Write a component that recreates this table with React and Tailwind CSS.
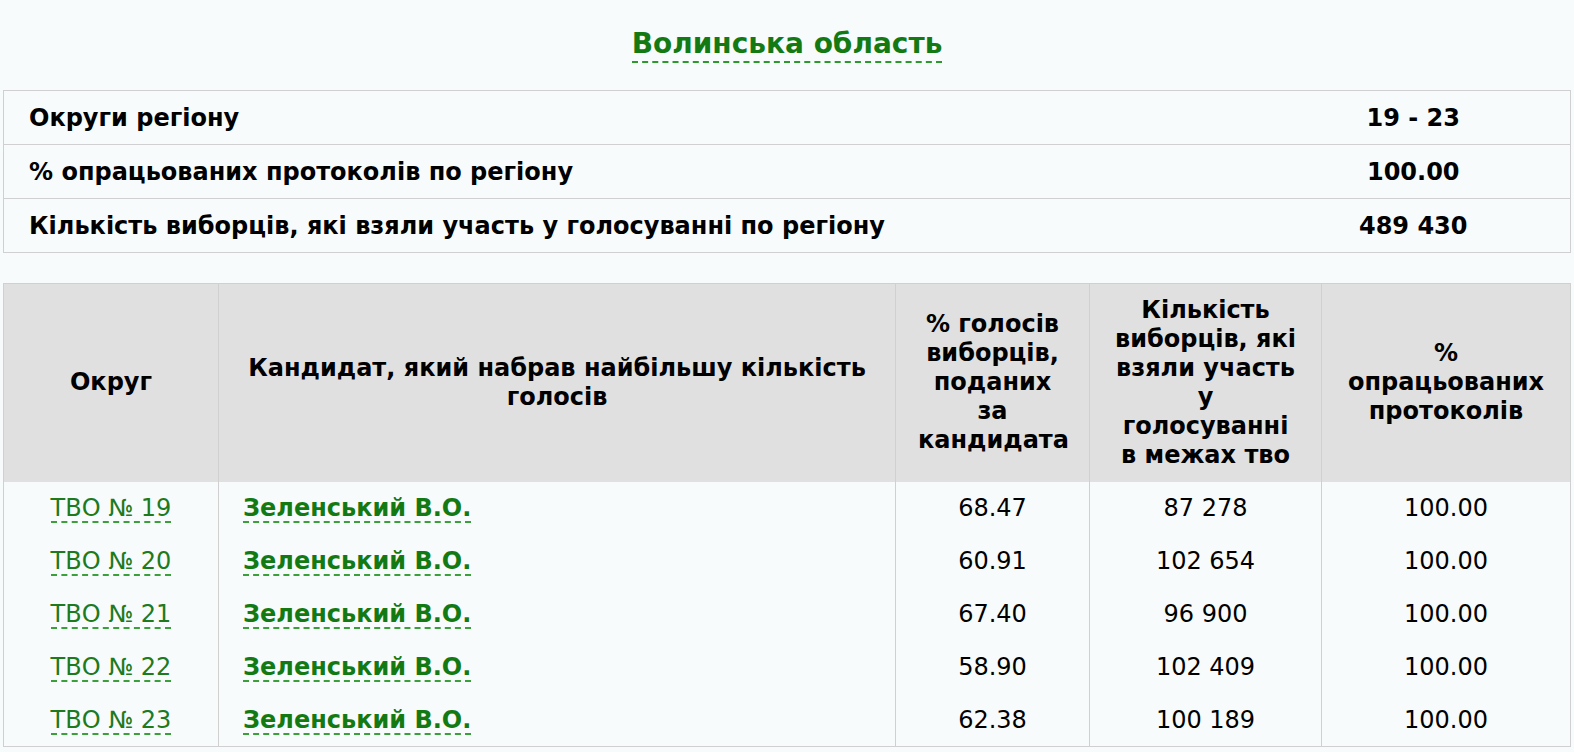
export default function App() {
  const rows = [
    ["19", "68.47", "87 278", "100.00"],
    ["20", "60.91", "102 654", "100.00"],
    ["21", "67.40", "96 900", "100.00"],
    ["22", "58.90", "102 409", "100.00"],
    ["23", "62.38", "100 189", "100.00"],
  ];
  const font = { fontFamily: '"DejaVu Sans", Verdana, sans-serif' };
  return (
    <div className="min-h-[752px] bg-[#f7fbfc] text-black px-[3px]" style={font}>
      <div className="flex justify-center pt-[27px] pb-[27px]">
        <span className="text-[28px] leading-[34px] font-bold text-[#137a13] border-b-2 border-dashed border-[#2a9a2a]">
          Волинська область
        </span>
      </div>
      <table className="w-full border-collapse border border-[#d0d0d0] text-[24px] font-bold">
        <tbody>
          {[
            ["Округи регіону", "19 - 23"],
            ["% опрацьованих протоколів по регіону", "100.00"],
            ["Кількість виборців, які взяли участь у голосуванні по регіону", "489 430"],
          ].map(([a, b]) => (
            <tr key={a} className="h-[54px] border-b border-[#d0d0d0]">
              <td className="pl-[25px] text-left">{a}</td>
              <td className="w-[314px] text-center">{b}</td>
            </tr>
          ))}
        </tbody>
      </table>
      <table className="mt-[30px] w-full table-fixed border-collapse border border-[#d0d0d0] text-[24px]">
        <colgroup>
          <col className="w-[215px]" />
          <col className="w-[677px]" />
          <col className="w-[194px]" />
          <col className="w-[232px]" />
          <col />
        </colgroup>
        <thead>
          <tr className="bg-[#e0e0e0] h-[198px] font-bold leading-[29px]">
            <th className="border-r border-[#d0d0d0] px-2">Округ</th>
            <th className="border-r border-[#d0d0d0] px-[10px]">
              Кандидат, який набрав найбільшу кількість голосів
            </th>
            <th className="border-r border-[#d0d0d0] px-[22px]">
              % голосів виборців, поданих за кандидата
            </th>
            <th className="border-r border-[#d0d0d0] px-[24px]">
              Кількість виборців, які взяли участь у голосуванні в межах тво
            </th>
            <th className="px-[20px]">% опрацьованих протоколів</th>
          </tr>
        </thead>
        <tbody>
          {rows.map(([n, p, v, pr]) => (
            <tr key={n} className="h-[53px]">
              <td className="border-r border-[#d0d0d0] text-center">
                <span className="text-[#1d7a1d] border-b-2 border-dashed border-[#3aa03a] leading-[26px] inline-block">
                  ТВО № {n}
                </span>
              </td>
              <td className="border-r border-[#d0d0d0] pl-[24px] text-left">
                <span className="font-bold text-[#137a13] border-b-2 border-dashed border-[#3aa03a] leading-[26px] inline-block">
                  Зеленський В.О.
                </span>
              </td>
              <td className="border-r border-[#d0d0d0] text-center">{p}</td>
              <td className="border-r border-[#d0d0d0] text-center">{v}</td>
              <td className="text-center">{pr}</td>
            </tr>
          ))}
        </tbody>
      </table>
    </div>
  );
}
